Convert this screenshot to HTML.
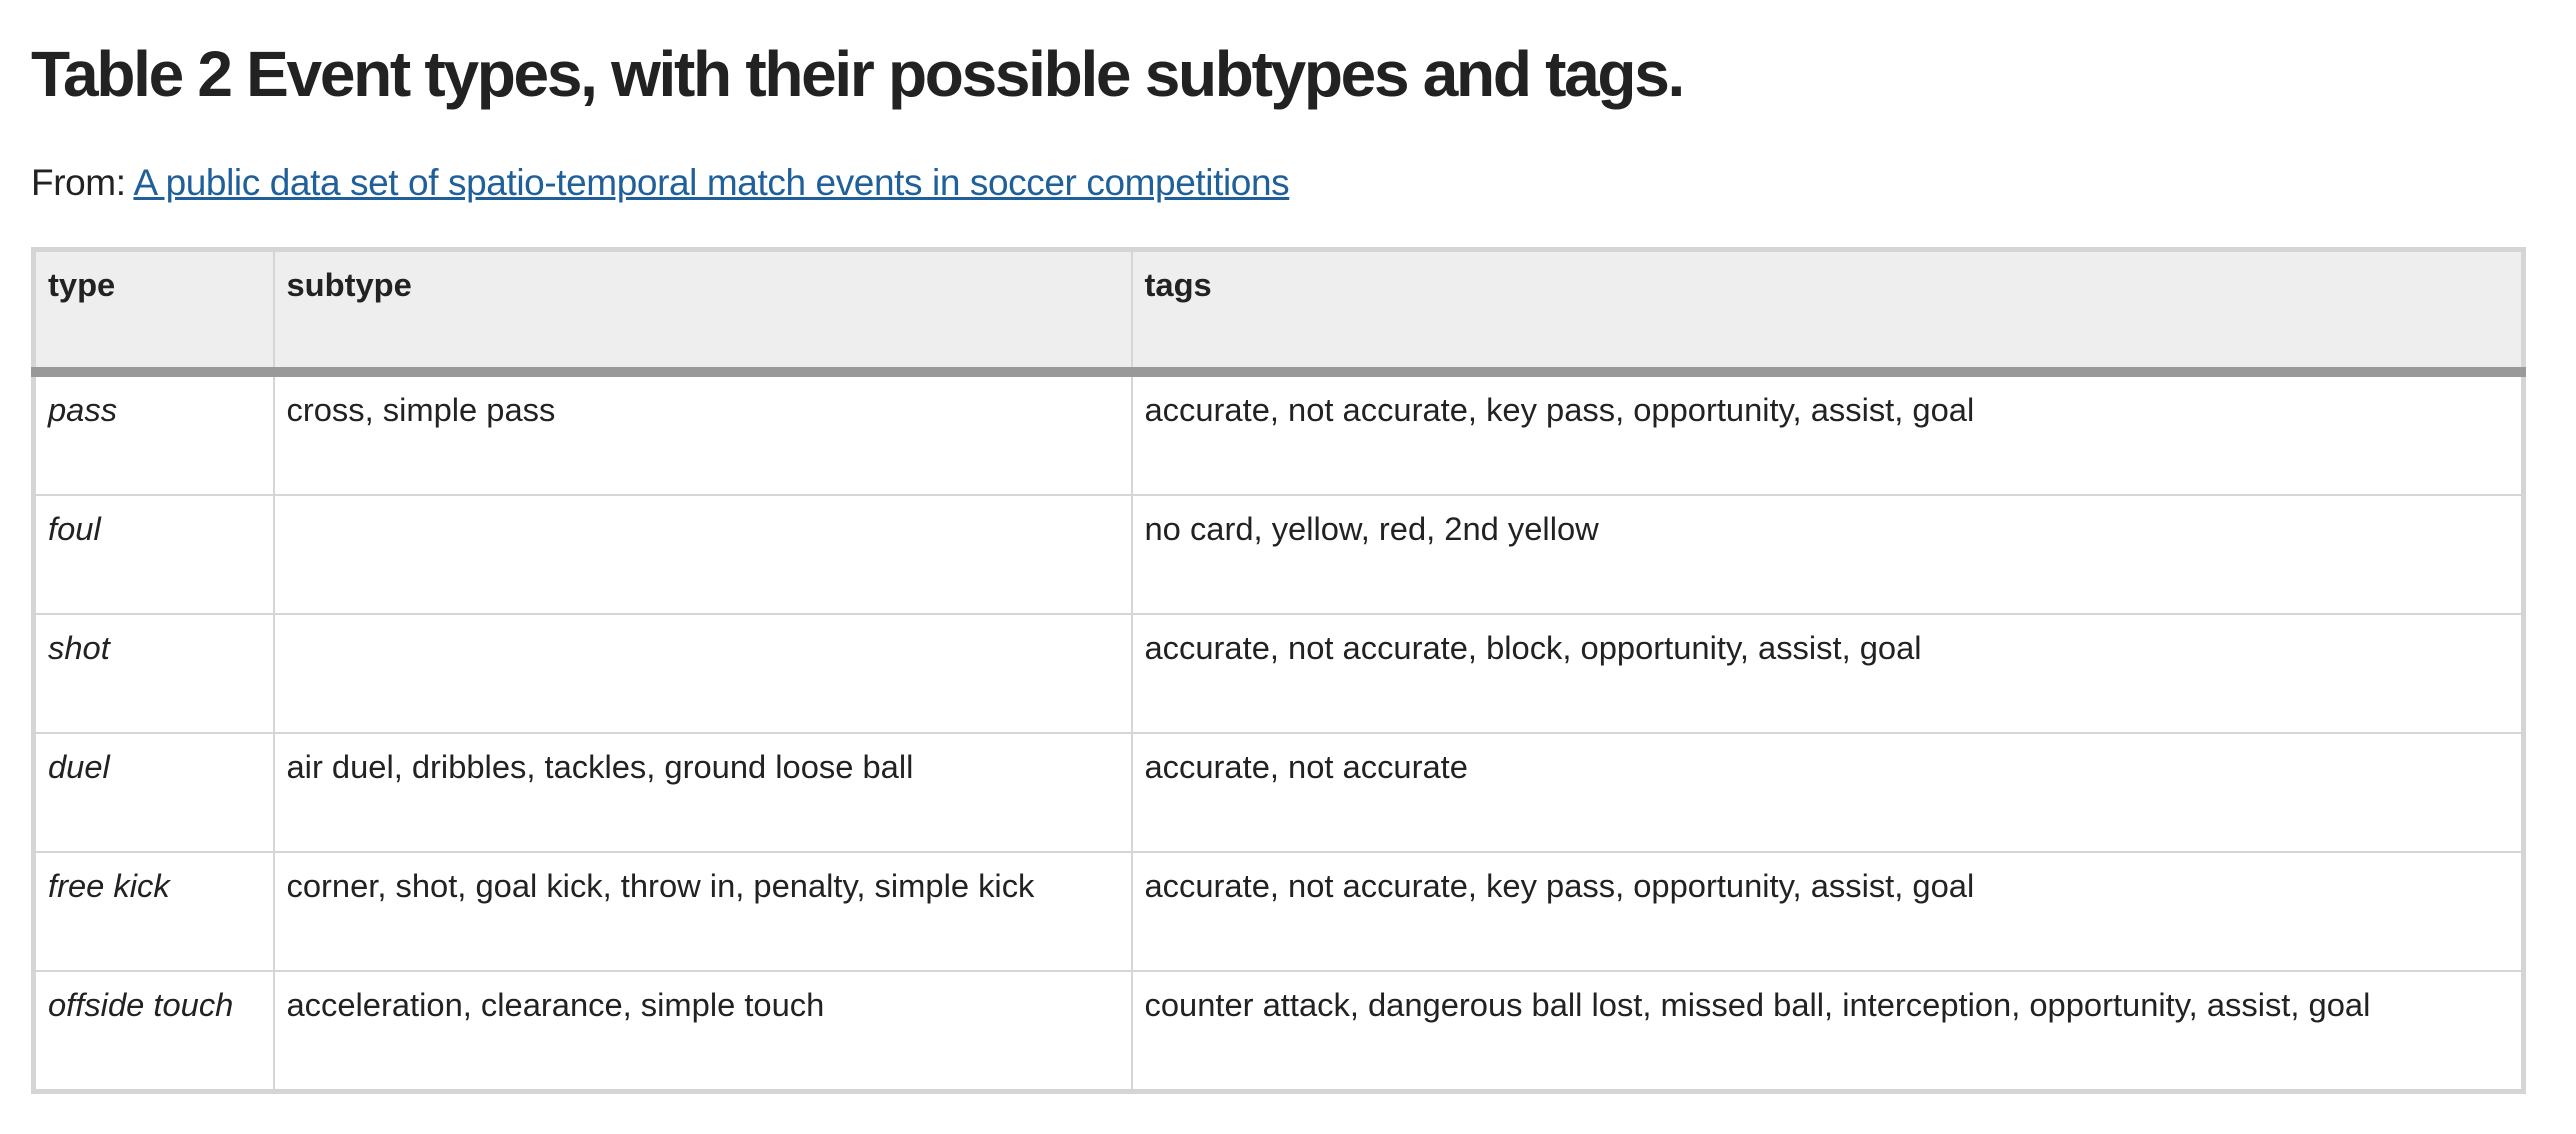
<!DOCTYPE html>
<html><head><meta charset="utf-8"><style>
body{margin:0;background:#fff;font-family:"Liberation Sans",sans-serif;color:#222;width:2576px;height:1134px;overflow:hidden}
h1{position:absolute;left:31px;top:36px;margin:0;font-size:64px;font-weight:bold;letter-spacing:-2.3px;line-height:76px;white-space:nowrap}
.from{position:absolute;left:31px;top:163px;font-size:37px;letter-spacing:-0.4px;line-height:40px;white-space:nowrap}
.from a{color:#1f5f9a;text-decoration:underline}
table{position:absolute;left:31px;top:247px;width:2495px;border:5px solid #d5d5d5;border-collapse:collapse;table-layout:fixed;font-size:32.7px}
td,th{border:2px solid #d5d5d5;padding:13px 14px 11px 12px;vertical-align:top;text-align:left;line-height:40px}
th{background:#eee;height:91px;font-weight:bold;border-bottom:10px solid #999}
td{height:93px}
td.t{font-style:italic}
</style></head><body>
<h1>Table 2 Event types, with their possible subtypes and tags.</h1>
<div class="from">From: <a>A public data set of spatio-temporal match events in soccer competitions</a></div>
<table>
<colgroup><col style="width:240px"><col style="width:858px"><col></colgroup>
<tr><th>type</th><th>subtype</th><th>tags</th></tr>
<tr><td class="t">pass</td><td>cross, simple pass</td><td>accurate, not accurate, key pass, opportunity, assist, goal</td></tr>
<tr><td class="t">foul</td><td></td><td>no card, yellow, red, 2nd yellow</td></tr>
<tr><td class="t">shot</td><td></td><td>accurate, not accurate, block, opportunity, assist, goal</td></tr>
<tr><td class="t">duel</td><td>air duel, dribbles, tackles, ground loose ball</td><td>accurate, not accurate</td></tr>
<tr><td class="t">free kick</td><td>corner, shot, goal kick, throw in, penalty, simple kick</td><td>accurate, not accurate, key pass, opportunity, assist, goal</td></tr>
<tr><td class="t">offside touch</td><td>acceleration, clearance, simple touch</td><td>counter attack, dangerous ball lost, missed ball, interception, opportunity, assist, goal</td></tr>
</table>
</body></html>
